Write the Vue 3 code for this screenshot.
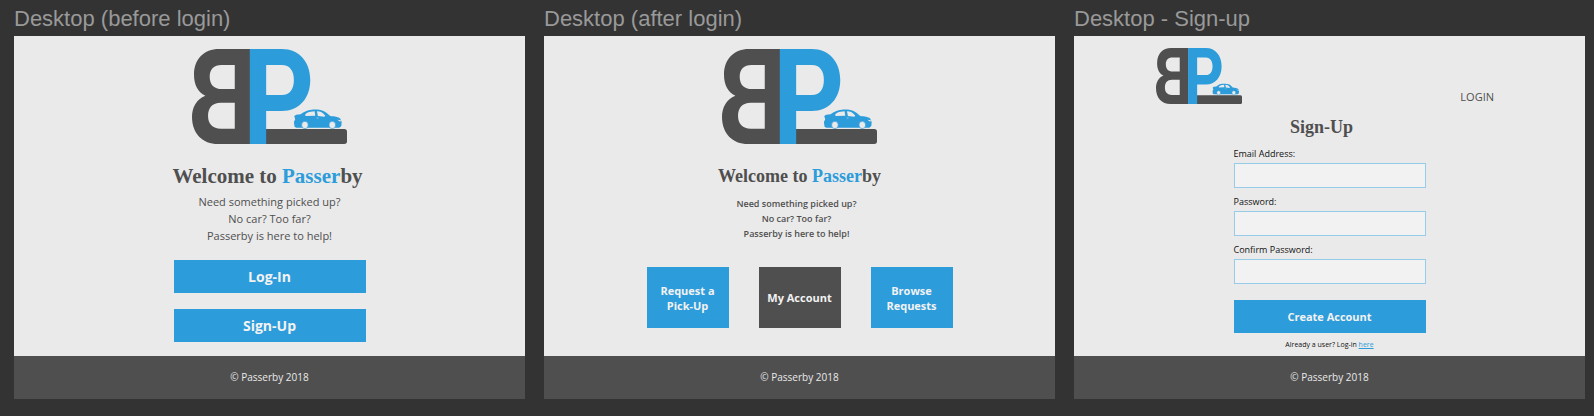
<script setup>
import { h } from 'vue'

const intro = ['Need something picked up?', 'No car? Too far?', 'Passerby is here to help!']

const fields = [
  { id: 'email', label: 'Email Address:', type: 'email' },
  { id: 'password', label: 'Password:', type: 'password' },
  { id: 'confirm', label: 'Confirm Password:', type: 'password' },
]

const shape = (d, fill) => h('path', { d, fill, 'fill-rule': 'evenodd' })

const BrandLogo = () =>
  h(
    'svg',
    { viewBox: '34 27 464 285', preserveAspectRatio: 'none', role: 'img', 'aria-label': 'Passerby logo' },
    [
      // mirrored B
      shape(
        'M208 27H115C70 27 40 57 40 104C40 134 52 157 74 167C47 177 34 203 34 230C34 280 65 312 112 312H208Z' +
          'M162 75V147H124C100 147 87 134 87 110C87 88 100 75 122 75Z' +
          'M162 188V266H120C96 266 82 252 82 228C82 203 95 188 120 188Z',
        '#4f4f4f',
      ),
      // road
      shape('M255 267H490Q498 267 498 275V304Q498 312 490 312H255Z', '#4f4f4f'),
      // P
      shape(
        'M207 27H303C355 27 388 66 388 120C388 175 355 213 303 213H256V312H207Z' +
          'M256 75V165H303C327 165 339 148 339 120C339 93 327 75 303 75Z',
        '#2d9cdb',
      ),
      // car body with windows
      shape(
        'M341 260L339 246L343 238L340 228L346 224L359 223C370 215 379 210 392 209C405 208 418 209 426 212' +
          'C434 215 441 222 448 228C460 229 473 231 478 236L482 246L481 258L475 263H346Z' +
          'M372 226C375 219 383 215 401 214L403 227L376 228Z' +
          'M408 214C419 214 426 218 433 227L430 230L411 228Z' +
          'M469 239L480 241L478 245Z' +
          'M407 233H413V235H407Z',
        '#2d9cdb',
      ),
      // wheels
      ...[372, 454].map((cx) =>
        h('ellipse', { cx, cy: 255, rx: 10, ry: 11, fill: '#eaeaea', stroke: '#2d9cdb', 'stroke-width': 2 }),
      ),
    ],
  )
</script>

<template>
  <main class="board">
    <section class="frame">
      <h2 class="frame-title">Desktop (before login)</h2>
      <div class="screen">
        <div class="content">
          <BrandLogo class="logo" />
          <h1 class="heading heading-large">Welcome to <span class="accent">Passer</span>by</h1>
          <p class="intro intro-large">
            <span v-for="line in intro" :key="line">{{ line }}</span>
          </p>
          <div class="stack">
            <button type="button" class="button button-large">Log-In</button>
            <button type="button" class="button button-large">Sign-Up</button>
          </div>
        </div>
        <footer class="footer">© Passerby 2018</footer>
      </div>
    </section>

    <section class="frame">
      <h2 class="frame-title">Desktop (after login)</h2>
      <div class="screen">
        <div class="content">
          <BrandLogo class="logo" />
          <h1 class="heading">Welcome to <span class="accent">Passer</span>by</h1>
          <p class="intro">
            <span v-for="line in intro" :key="line">{{ line }}</span>
          </p>
          <div class="tiles">
            <button type="button" class="button tile">Request a<br />Pick-Up</button>
            <button type="button" class="button tile tile-dark">My Account</button>
            <button type="button" class="button tile">Browse<br />Requests</button>
          </div>
        </div>
        <footer class="footer">© Passerby 2018</footer>
      </div>
    </section>

    <section class="frame">
      <h2 class="frame-title">Desktop - Sign-up</h2>
      <div class="screen">
        <div class="content content-signup">
          <header class="top">
            <BrandLogo class="logo-small" />
            <a href="#login" class="login">LOGIN</a>
          </header>
          <h1 class="heading heading-signup">Sign-Up</h1>
          <form class="form" @submit.prevent>
            <div v-for="field in fields" :key="field.id" class="field">
              <label :for="field.id">{{ field.label }}</label>
              <input :id="field.id" :type="field.type" />
            </div>
            <button type="submit" class="button create">Create Account</button>
          </form>
          <p class="hint">Already a user? Log-in <a href="#login">here</a></p>
        </div>
        <footer class="footer">© Passerby 2018</footer>
      </div>
    </section>
  </main>
</template>

<style>
body {
  margin: 0;
  background: #333333;
}
</style>

<style scoped>
* {
  box-sizing: border-box;
}

.board {
  display: grid;
  grid-template-columns: repeat(3, minmax(0, 1fr));
  gap: 19px;
  min-height: 100vh;
  padding: 6px 9px 17px 14px;
  background: #333333;
  color: #4f4f4f;
  font-family: 'Open Sans', 'Noto Sans', sans-serif;
}

.frame {
  display: flex;
  flex-direction: column;
}

.frame-title {
  margin: 0 0 4px;
  color: #999999;
  font: 400 22px/26px 'Liberation Sans', Arial, sans-serif;
}

.screen {
  flex: 1;
  display: flex;
  flex-direction: column;
  background: #eaeaea;
}

.content {
  flex: 1;
  display: flex;
  flex-direction: column;
  align-items: center;
  padding-top: 13px;
}

.content-signup {
  padding-top: 12px;
}

.logo {
  width: 155px;
  height: 95px;
}

.logo-small {
  width: 86px;
  height: 56px;
}

.heading {
  margin: 20px 0 0;
  font: 700 18px/24px 'Liberation Serif', 'Times New Roman', serif;
}

.heading-large {
  padding-right: 4px;
  font-size: 21px;
}

.heading-signup {
  margin-top: 11px;
  padding-right: 16px;
}

.accent {
  color: #2d9cdb;
}

.intro {
  display: flex;
  flex-direction: column;
  margin: 8px 0 0;
  padding-right: 6px;
  font-size: 9px;
  font-weight: 600;
  line-height: 15px;
  text-align: center;
}

.intro-large {
  margin-top: 5px;
  padding-right: 0;
  font-size: 11px;
  font-weight: 400;
  line-height: 17px;
}

.button {
  padding: 0;
  border: 0;
  background: #2d9cdb;
  color: #f2f2f2;
  font-family: inherit;
  font-size: 11px;
  font-weight: 700;
  line-height: 15px;
  cursor: pointer;
}

.stack {
  display: flex;
  flex-direction: column;
  gap: 16px;
  width: 192px;
  margin-top: 16px;
}

.button-large {
  height: 33px;
  font-size: 14px;
}

.tiles {
  display: flex;
  gap: 30px;
  margin-top: 26px;
}

.tile {
  width: 82px;
  height: 61px;
}

.tile-dark {
  background: #4f4f4f;
}

.top {
  align-self: stretch;
  display: flex;
  align-items: flex-end;
  justify-content: space-between;
  padding: 0 91px 0 82px;
}

.login {
  color: inherit;
  font-size: 11px;
  line-height: 15px;
  text-decoration: none;
}

.form {
  display: flex;
  flex-direction: column;
  gap: 8px;
  width: 192px;
  margin-top: 9px;
}

.field {
  display: flex;
  flex-direction: column;
  gap: 3px;
  color: #111111;
  font-size: 9px;
  line-height: 12px;
}

.field input {
  width: 100%;
  height: 25px;
  padding: 0 6px;
  border: 1px solid #96cbea;
  border-radius: 0;
  background: #f2f2f2;
  font: inherit;
}

.create {
  height: 33px;
  margin-top: 8px;
}

.hint {
  margin: 7px 0 0;
  color: #111111;
  font-size: 7px;
  line-height: 10px;
}

.hint a {
  color: #2d9cdb;
}

.footer {
  display: flex;
  align-items: center;
  justify-content: center;
  height: 43px;
  background: #4f4f4f;
  color: #eaeaea;
  font-size: 10px;
  line-height: 13px;
}
</style>
